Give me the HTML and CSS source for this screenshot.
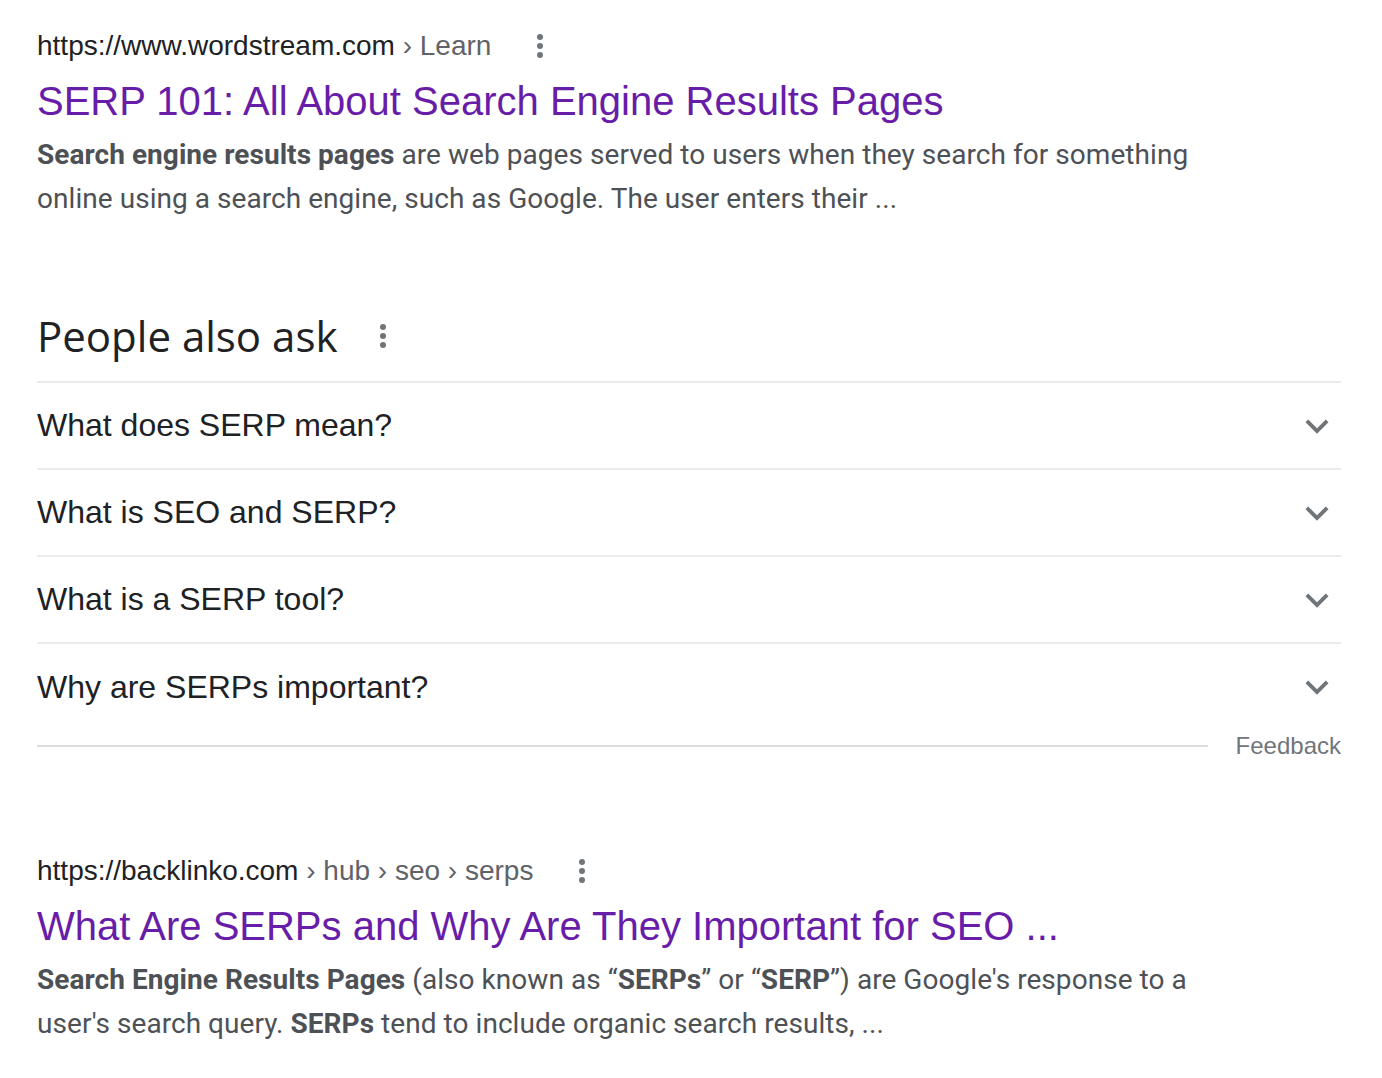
FILE: index.html
```html
<!DOCTYPE html>
<html>
<head>
<meta charset="utf-8">
<link rel="stylesheet" href="styles.css">
</head>
<body>
<div class="page">
  <div class="result">
    <div class="cite-row">
      <cite class="cite">https://www.wordstream.com<span class="crumb"> › Learn</span></cite>
      <span class="dots"><i></i><i></i><i></i></span>
    </div>
    <a class="title">SERP 101: All About Search Engine Results Pages</a>
    <div class="snippet"><b>Search engine results pages</b> are web pages served to users when they search for something online using a search engine, such as Google. The user enters their ...</div>
  </div>

  <div class="paa">
    <div class="paa-head">
      <h2 class="paa-title">People also ask</h2>
      <span class="dots"><i></i><i></i><i></i></span>
    </div>
    <div class="q"><span>What does SERP mean?</span><svg class="chev" viewBox="0 0 24 24"><path d="M7.41 8.59L12 13.17l4.59-4.58L18 10l-6 6-6-6 1.41-1.41z"/></svg></div>
    <div class="q"><span>What is SEO and SERP?</span><svg class="chev" viewBox="0 0 24 24"><path d="M7.41 8.59L12 13.17l4.59-4.58L18 10l-6 6-6-6 1.41-1.41z"/></svg></div>
    <div class="q"><span>What is a SERP tool?</span><svg class="chev" viewBox="0 0 24 24"><path d="M7.41 8.59L12 13.17l4.59-4.58L18 10l-6 6-6-6 1.41-1.41z"/></svg></div>
    <div class="q last"><span>Why are SERPs important?</span><svg class="chev" viewBox="0 0 24 24"><path d="M7.41 8.59L12 13.17l4.59-4.58L18 10l-6 6-6-6 1.41-1.41z"/></svg></div>
    <div class="feedback-row"><div class="fb-line"></div><span class="feedback">Feedback</span></div>
  </div>

  <div class="result second">
    <div class="cite-row">
      <cite class="cite">https://backlinko.com<span class="crumb"> › hub › seo › serps</span></cite>
      <span class="dots"><i></i><i></i><i></i></span>
    </div>
    <a class="title">What Are SERPs and Why Are They Important for SEO ...</a>
    <div class="snippet"><b>Search Engine Results Pages</b> (also known as “<b>SERPs</b>” or “<b>SERP</b>”) are Google's response to a user's search query. <b>SERPs</b> tend to include organic search results, ...</div>
  </div>
</div>
</body>
</html>
```

FILE: styles.css
```css
html, body { margin: 0; padding: 0; background: #fff; }
.page { padding: 26px 41px 0 37px; }
.result { width: 1200px; }
.cite-row { display: flex; align-items: center; gap: 46px; height: 40px; }
.cite { font-style: normal; font-family: "Liberation Sans", Arial, sans-serif; font-size: 28px; color: #202124; line-height: 40px; }
.crumb { color: #5f6368; }
.dots { display: flex; flex-direction: column; gap: 3px; width: 6px; }
.dots i { display: block; width: 6px; height: 6px; border-radius: 50%; background: #70757a; }
.title { display: block; font-family: "Liberation Sans", Arial, sans-serif; font-size: 40px; line-height: 52px; color: #681da8; margin-top: 9px; text-decoration: none; }
.snippet { font-family: Roboto, Arial, sans-serif; font-size: 28px; line-height: 44px; color: #4d5156; margin-top: 6px; letter-spacing: 0.05px; }
.snippet b { font-weight: 700; }
.paa { margin-top: 83px; }
.paa-head { display: flex; align-items: center; gap: 43px; height: 64px; border-bottom: 2px solid #ebebeb; padding-bottom: 13px; }
.paa-title { margin: 0; font-family: "Open Sans", Roboto, sans-serif; font-weight: 400; font-size: 42px; color: #202124; line-height: 56px; letter-spacing: 0; }
.q { display: flex; align-items: center; justify-content: space-between; height: 85px; border-bottom: 2px solid #ebebeb; font-family: "Liberation Sans", Arial, sans-serif; font-size: 32px; color: #202124; }
.q.last { border-bottom: none; height: 86px; }
.chev { width: 46px; height: 46px; fill: #70757a; margin-right: 1px; }
.feedback-row { display: flex; align-items: center; gap: 28px; margin-top: 1px; height: 30px; }
.fb-line { flex: 1; height: 2px; background: #dadce0; }
.feedback { font-family: "Liberation Sans", Arial, sans-serif; font-size: 24px; color: #70757a; }
.second { margin-top: 90px; }
```
